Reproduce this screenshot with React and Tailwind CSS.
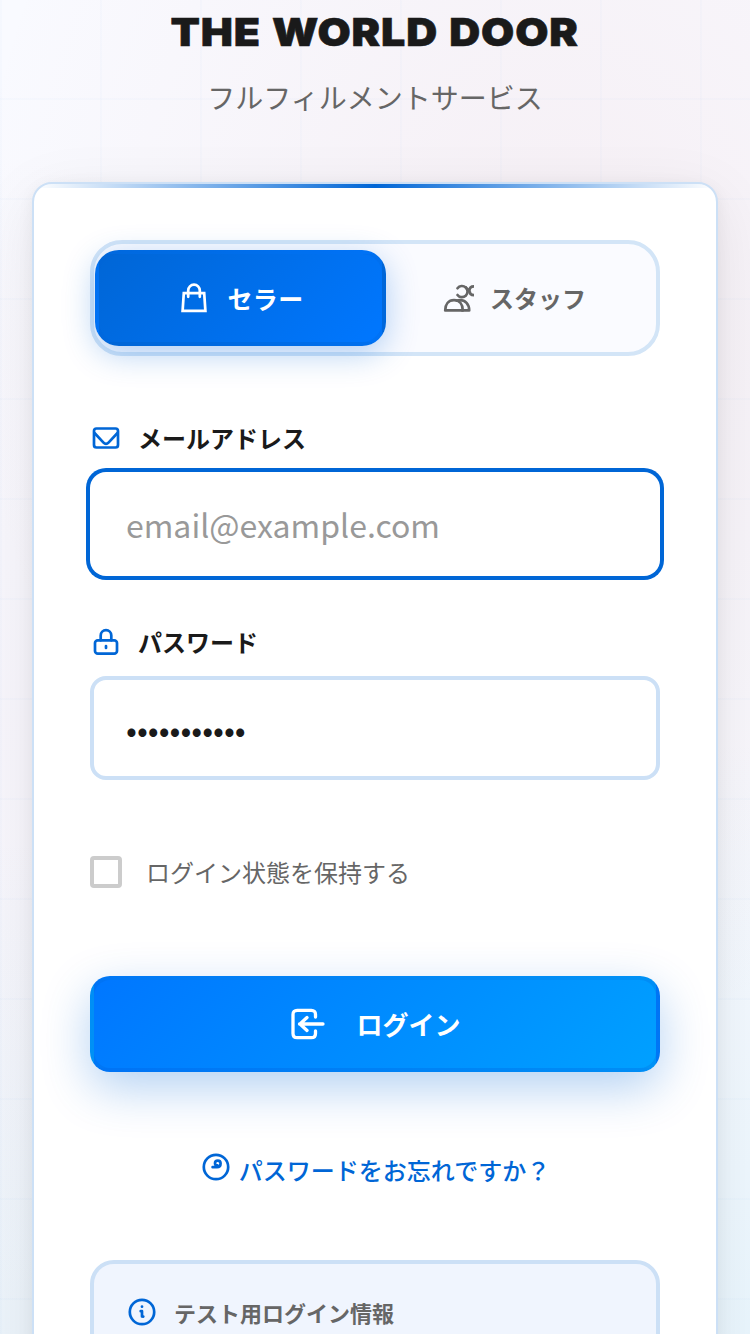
import React from "react";

function Icon({ children, className = "", width = 32 }) {
  return (
    <svg
      width={width}
      height="32"
      viewBox={`0 0 ${width} 32`}
      fill="none"
      stroke="currentColor"
      strokeWidth="2.7"
      strokeLinecap="round"
      strokeLinejoin="round"
      className={`shrink-0 ${className}`}
    >
      {children}
    </svg>
  );
}

function BagIcon() {
  return (
    <Icon>
      <path d="M5.8 11.2h20.4l1.2 17.6H4.6z" strokeLinejoin="miter" />
      <path d="M10.2 14.8V8.5a5.8 5.8 0 0 1 11.6 0v6.3" />
    </Icon>
  );
}

function StaffIcon() {
  return (
    <Icon>
      <path d="M3.2 28.4c0-6 3.2-10.2 8.8-10.2s8.8 4.2 8.8 10.2z" />
      <path d="M15 18.7c1-.4 2-.5 3-.5 5.200 0 9.200 3.900 9.200 10.200h-7" />
      <path d="M15.500 6.200a5.600 5.600 0 1 1 0 6.800" />
      <path d="M24 5.500l4 4.800M32 4.400c-3 0-4.600 1.800-4.600 4.400s1.600 4.400 4.600 4.400" />
    </Icon>
  );
}

function MailIcon() {
  return (
    <Icon>
      <rect x="4" y="6.500" width="24" height="19" rx="2.500" />
      <path d="M4.500 11l9 9.700c1.500 1.600 3.500 1.600 5 0l9-9.700" />
    </Icon>
  );
}

function LockIcon() {
  return (
    <Icon>
      <rect x="5" y="14.300" width="22" height="13.400" rx="2.800" />
      <path d="M10.700 14.300v-4.800a5.300 5.300 0 0 1 10.600 0v4.800M16 20v2" />
    </Icon>
  );
}

function LoginIcon() {
  return (
    <Icon width={36} className="[stroke-width:3.3]">
      <path d="M26.500 9V6.500c0-2.600-1.500-4.200-4.200-4.200H8.200C5.500 2.300 4 3.900 4 6.500v19c0 2.600 1.500 4.200 4.200 4.200h14.100c2.700 0 4.200-1.600 4.200-4.200V23" />
      <path d="M34 16H10.500M18 9.500L11 16l7 6.500" />
    </Icon>
  );
}

function HelpIcon() {
  return (
    <Icon>
      <circle cx="16" cy="16" r="12.200" />
      <path d="M12.600 16.200h4.400c2.400 0 3.600-1.300 3.600-3.600 0-2-1-3-2.800-3s-2.800 1-2.800 2.600c0 1.500 1 2.200 2.400 2.200" />
    </Icon>
  );
}

function InfoIcon() {
  return (
    <Icon>
      <circle cx="16" cy="16" r="12.200" />
      <path d="M16 10.600v.1M14.700 15.200H16v5.200l1.300.2" />
    </Icon>
  );
}

function FieldLabel({ icon, children }) {
  return (
    <div className="flex h-8 items-center gap-4 text-[24px] font-bold text-[#1a1a1a]">
      <span className="text-[#0066d6]">{icon}</span>
      <span>{children}</span>
    </div>
  );
}

export default function App() {
  return (
    <div className="h-[1334px] w-[750px] overflow-hidden bg-[#f9faff] bg-[repeating-linear-gradient(90deg,rgba(0,102,214,0.015)_0_2px,transparent_2px_100px),repeating-linear-gradient(180deg,transparent_0_98px,rgba(0,102,214,0.015)_98px_100px),radial-gradient(ellipse_600px_750px_at_75%_22%,rgba(205,110,120,0.08),transparent),radial-gradient(ellipse_500px_600px_at_0%_55%,rgba(215,140,180,0.04),transparent),radial-gradient(ellipse_500px_600px_at_100%_100%,rgba(80,205,240,0.09),transparent),radial-gradient(ellipse_500px_500px_at_0%_100%,rgba(80,170,200,0.08),transparent)] font-['Noto_Sans_CJK_JP',sans-serif]">
      <header className="flex h-[182px] flex-col items-center">
        <h1 className="mt-2 h-12 scale-x-[1.1] whitespace-nowrap font-['Inter',sans-serif] text-[39px] leading-[48px] font-black tracking-[0.8px] text-[#1a1a1a] [-webkit-text-stroke:0.6px_#1a1a1a] [font-optical-sizing:none] [font-variation-settings:'opsz'_14] [word-spacing:1.500px]">
          THE WORLD DOOR
        </h1>
        <p className="mt-[21px] whitespace-nowrap text-[28px] leading-10 text-[#666]">フルフィルメントサービス</p>
      </header>

      <main className="mx-8 flex h-[1400px] flex-col overflow-hidden rounded-[20px] border-2 border-[#cce0f6] bg-white shadow-[0_16px_64px_rgba(0,0,0,0.08),0_4px_16px_rgba(0,0,0,0.06)]">
        <div className="h-1 shrink-0 bg-[linear-gradient(90deg,transparent,#0066d6,transparent)]" />
        <div className="flex flex-col px-14 pt-[52px]">
          <div className="flex h-[116px] rounded-[32px] border-4 border-[#d3e5f7] bg-[#fafbff] py-[6px] pl-px">
            <button className="flex h-24 w-[291px] shrink-0 items-center justify-center gap-[18px] rounded-[24px] border-4 border-[#0066d6]/20 bg-[linear-gradient(135deg,#0066d6,#0077ff)] text-[25px] font-bold tracking-[0.3px] text-white shadow-[0_8px_32px_rgba(0,102,214,0.3)]">
              <BagIcon />
              <span className="mt-[2px]">セラー</span>
            </button>
            <button className="flex h-24 flex-1 items-center justify-center gap-4 pr-[14px] text-[24px] font-bold text-[#666]">
              <StaffIcon />
              <span>スタッフ</span>
            </button>
          </div>

          <div className="mt-[66px]">
            <FieldLabel icon={<MailIcon />}>メールアドレス</FieldLabel>
            <input
              type="email"
              placeholder="email@example.com"
              className="mt-[18px] block h-[104px] w-full rounded-[16px] bg-white px-9 text-[32px] text-[#1a1a1a] ring-4 ring-[#0066d6] outline-none placeholder:text-[#999]"
            />
          </div>

          <div className="mt-[50px]">
            <FieldLabel icon={<LockIcon />}>パスワード</FieldLabel>
            <input
              type="password"
              defaultValue="password123"
              className="mt-[18px] block h-[104px] w-full rounded-[16px] border-4 border-[#cce0f6] bg-white px-8 text-[32px] text-[#1a1a1a] outline-none"
            />
          </div>

          <label className="mt-[76px] flex h-8 items-center gap-6 text-[24px] text-[#666]">
            <span className="size-8 shrink-0 rounded-[4px] border-4 border-[#ccc] bg-white" />
            <span>ログイン状態を保持する</span>
          </label>

          <button className="mt-[88px] flex h-24 items-center justify-center gap-[31px] rounded-[20px] border-4 border-[#0066d6]/25 bg-[linear-gradient(135deg,#0077ff,#00a0ff)] text-[26px] font-bold text-white shadow-[0_16px_48px_rgba(0,102,214,0.3)]">
            <LoginIcon />
            <span className="-mt-[2px]">ログイン</span>
          </button>

          <a className="mt-[80px] flex h-9 items-center justify-center gap-[7px] text-[24px] font-medium whitespace-nowrap text-[#0066d6]">
            <span className="pb-[6px]">
              <HelpIcon />
            </span>
            <span>パスワードをお忘れですか？</span>
          </a>

          <section className="mt-[72px] h-[240px] rounded-[24px] border-4 border-[#cce0f6] bg-[#f0f5fe] px-8 pt-8">
            <div className="flex h-8 items-center gap-4 text-[22px] font-bold text-[#666]">
              <span className="text-[#0066d6]">
                <InfoIcon />
              </span>
              <span>テスト用ログイン情報</span>
            </div>
          </section>
        </div>
      </main>
    </div>
  );
}
